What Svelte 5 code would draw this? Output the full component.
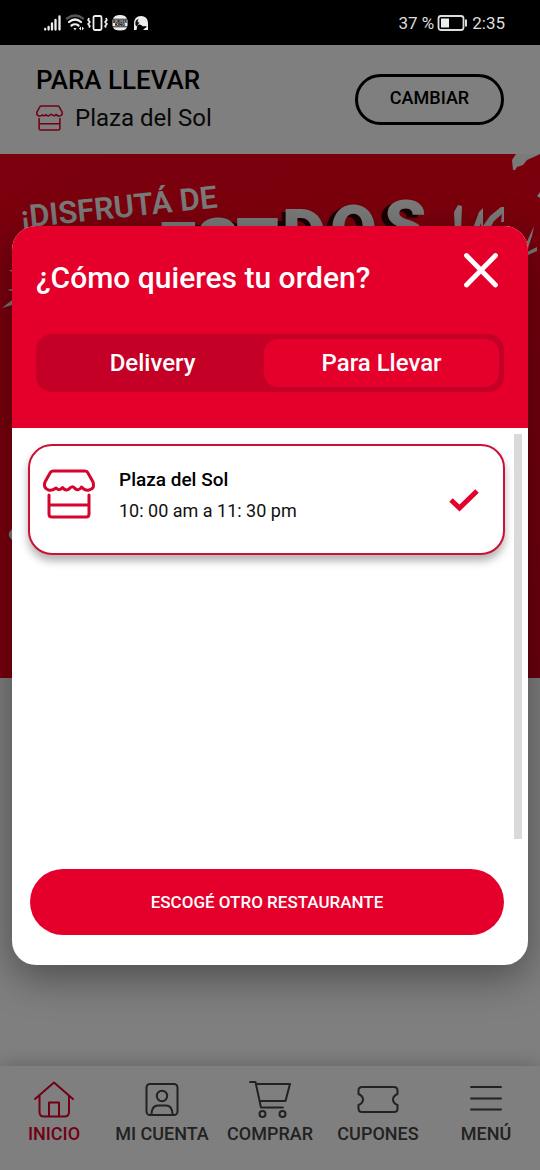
<script>
  let mode = $state('pickup');
  const tabs = [
    { id: 'home', label: 'INICIO' },
    { id: 'account', label: 'MI CUENTA' },
    { id: 'shop', label: 'COMPRAR' },
    { id: 'coupons', label: 'CUPONES' },
    { id: 'menu', label: 'MENÚ' }
  ];
</script>

{#snippet store(cls)}
  <svg class={cls} viewBox="0 0 52 50" fill="none" stroke="currentColor" stroke-linejoin="round" stroke-linecap="round" aria-hidden="true">
    <path d="M10 2H42Q44 2 45 4L50 13Q52 20 46 21Q42 22 38.500 18Q35.500 22.500 32 19.500Q29 16 26 20Q22.500 22.500 19.500 18.500Q16 22.500 13 19Q9 22 5.500 21Q0 19 2 13L7 4Q8 2 10 2Z" />
    <path d="M6 26V45Q6 48 9 48H43Q46 48 46 45V26M6 36H46" />
  </svg>
{/snippet}

<div class="app">
  <div class="status">
    <svg class="signals" viewBox="0 0 108 20" aria-hidden="true" fill="#eee">
      <g stroke="#eee" stroke-width="2.300" stroke-linecap="round">
        <path d="M2.200 16v.5M5.600 14v2.500M9 10.500v6M12.500 7v9.500M16.500 3.500v13" />
      </g>
      <g fill="none" stroke-width="2.200" stroke-linecap="round">
        <path d="M24 5.500q8-6 16 0" stroke="#555" />
        <path d="M26 9q6-5 12 0M28.500 12.500q3.500-2.500 7 0" stroke="#eee" />
      </g>
      <path d="M30.500 15h3l-1.500 2.500zM36 15.500l2-2v4zM39 13.500l2 2l-2 2z" />
      <g fill="none" stroke="#eee" stroke-width="1.800">
        <rect x="50.500" y="3" width="8" height="14" rx="1.500" />
        <path d="M46 5l-.8 2l1.600 2l-1.600 2l1.600 2l-.8 1.500M63 5l.8 2l-1.600 2l1.600 2l-1.600 2l.8 1.500" />
      </g>
      <path d="M70 5.800q1-3.800 7-3.800t7 3.800zM70 14.200h14q-1 3.300-7 3.300t-7-3.300z" />
      <rect x="69.500" y="6.600" width="15" height="6.800" />
      <text x="77" y="9.700" text-anchor="middle" font-size="3.600" fill="#000" font-weight="900">BURGER</text>
      <text x="77" y="13.200" text-anchor="middle" font-size="4.400" fill="#000" font-weight="900">KING</text>
      <path d="M91 17v-6q0-8 7-8q6.500 0 7 7v7h-5l3-3l-3-.5q-3-3-5.500-1.500l-1 5z" />
      <path d="M92.500 12q-1-5 3-6l-1 3l2 .5l-3 4zM99 13.500l4.500-.5l-.5 2z" fill="#111" />
    </svg>
    <span class="power">
      <span>37 %</span>
      <svg viewBox="0 0 32 18" width="32" height="18" aria-hidden="true">
        <rect x="1.500" y="2" width="25" height="14" rx="2.500" fill="none" stroke="#ddd" stroke-width="1.800" />
        <rect x="4" y="4.500" width="8" height="9" fill="#eee" />
        <path d="M29 5.500v7" stroke="#ddd" stroke-width="2" />
      </svg>
      <span>2:35</span>
    </span>
  </div>

  <div class="screen">
    <header class="top">
      <div class="place">
        <strong>PARA LLEVAR</strong>
        <span class="where">{@render store('shop-small')}Plaza del Sol</span>
      </div>
      <button class="change" type="button">CAMBIAR</button>
    </header>

    <div class="banner">
      <svg viewBox="0 0 540 524" preserveAspectRatio="xMidYMin slice" aria-hidden="true">
        <defs>
          <linearGradient id="glow" x1="0" y1="0" x2="1" y2="1">
            <stop offset="0" stop-color="#f8001c" />
            <stop offset=".5" stop-color="#f40018" />
            <stop offset="1" stop-color="#d8001c" />
          </linearGradient>
        </defs>
        <rect width="540" height="524" fill="url(#glow)" />
        <text x="22" y="74" transform="rotate(-6 22 74)" class="slogan">¡DISFRUTÁ DE</text>
        <text class="brush shade" x="164 202 242 278 324 378" y="120 116 116 107 103 98">ESTDOS</text>
        <text class="brush" x="158 196 236 282 330 384" y="117 113 113 104 100 95">ESTDOS</text>
        <g fill="#f4f4f4">
          <path d="M455 78l-1-20l4-7l4 1l-1 26zM472 77l7-19l4-4v18l7-10l11-9h3v15h-3l1-8l-8 7l-6 11h-6l-1-9l-3 8zM513 16l-1-10l4-6h24l-4 2l-9 4l-4 5l-6 2l-2 3zM525 92l9-20l-2 10l-4 12zM527 98l10-5v4l-9 4zM540 44l-3-2l3-4z" />
          <path d="M12 116h-3l3 2zM12 135l-5 1l5 1zM12 146l-10 8l10-3zM12 375q-6 5-1 10l1 1z" />
        </g>
      </svg>
    </div>

    <div class="filler"></div>

    <nav class="bottom">
      {#each tabs as tab}
        <a href="#{tab.id}" class:active={tab.id === 'home'}>
          <svg viewBox="0 0 44 40" fill="none" stroke="currentColor" stroke-width="2" stroke-linecap="round" stroke-linejoin="round" aria-hidden="true">
            {#if tab.id === 'home'}
              <path d="M3 19L22 2.500L41 19M7.500 16V32Q7.500 36.500 12 36.500H32.500Q37 36.500 37 32V16M17 36V22.500H27V36" />
            {:else if tab.id === 'account'}
              <rect x="6.500" y="4" width="31" height="31" rx="3.500" />
              <circle cx="22" cy="16" r="5.200" />
              <path d="M11.500 34Q12 25.500 18 25.500H26Q32 25.500 32.500 34" />
            {:else if tab.id === 'shop'}
              <path d="M2 2H7.500L13 27.500H35M8.500 4H42L37.500 21H12" />
              <circle cx="14.500" cy="34" r="3" />
              <circle cx="34.500" cy="34" r="3" />
            {:else if tab.id === 'coupons'}
              <path d="M6 7H38Q41.500 7 41.500 10.500V14Q37 16 37 19.500Q37 23 41.500 25V28.500Q41.500 32 38 32H6Q2.500 32 2.500 28.500V25Q7 23 7 19.500Q7 16 2.500 14V10.500Q2.500 7 6 7Z" />
            {:else}
              <path d="M7 7H37M7 18.500H37M7 29.500H37" />
            {/if}
          </svg>
          <span>{tab.label}</span>
        </a>
      {/each}
    </nav>

    <div class="backdrop">
      <div class="dialog" role="dialog" aria-modal="true" aria-labelledby="ask">
        <div class="head">
          <div class="title">
            <h1 id="ask">¿Cómo quieres tu orden?</h1>
            <button class="close" type="button" aria-label="Cerrar">
              <svg viewBox="0 0 36 36" aria-hidden="true"><path d="M3.500 3.500L32.500 33M32.500 3.500L3.500 33" fill="none" stroke="#fff" stroke-width="4.800" stroke-linecap="round" /></svg>
            </button>
          </div>
          <div class="switch">
            <button type="button" class:on={mode === 'delivery'} onclick={() => (mode = 'delivery')}>Delivery</button>
            <button type="button" class:on={mode === 'pickup'} onclick={() => (mode = 'pickup')}>Para Llevar</button>
          </div>
        </div>
        <div class="list">
          <button class="card" type="button">
            {@render store('shop-large')}
            <span class="info">
              <b>Plaza del Sol</b>
              <span>10: 00 am a 11: 30 pm</span>
            </span>
            <svg class="check" viewBox="0 0 30 24" aria-hidden="true"><path d="M2 12L10.500 20L28 3" fill="none" stroke="#e4002b" stroke-width="5" /></svg>
          </button>
          <div class="track"></div>
        </div>
        <div class="foot"><button class="other" type="button">ESCOGÉ OTRO RESTAURANTE</button></div>
      </div>
    </div>
  </div>
</div>

<style>
  :global(body) { margin: 0; background: #fff; }
  .app {
    min-height: 100vh;
    display: flex;
    flex-direction: column;
    font-family: Roboto, "Liberation Sans", sans-serif;
    color: #000;
  }
  button {
    font: inherit;
    color: inherit;
    border: 0;
    padding: 0;
    background: none;
    cursor: pointer;
  }
  svg { display: block; flex: none; }
  .status {
    height: 45px;
    padding: 0 35px 0 43px;
    background: #000;
    color: #ddd;
    display: flex;
    align-items: center;
    justify-content: space-between;
    font-size: 17px;
  }
  .signals { width: 108px; height: 20px; }
  .power { display: flex; align-items: center; gap: 3px; }
  .screen { position: relative; flex: 1; display: flex; flex-direction: column; }
  .top {
    box-sizing: border-box;
    height: 109px;
    padding: 0 36px;
    display: flex;
    align-items: center;
    justify-content: space-between;
  }
  .place { display: flex; flex-direction: column; gap: 6px; padding-bottom: 2px; }
  .place strong { font-size: 26px; line-height: 32px; font-weight: 500; }
  .where { display: flex; align-items: center; gap: 12px; font-size: 24px; line-height: 32px; color: #111; }
  .where :global(.shop-small) { width: 27px; height: 26px; stroke-width: 3; color: #e4002b; }
  .change {
    box-sizing: border-box;
    width: 149px;
    height: 51px;
    padding-bottom: 4px;
    border: 3px solid #000;
    border-radius: 26px;
    font-size: 18px;
    font-weight: 500;
  }
  .banner { height: 524px; overflow: hidden; }
  .banner svg { width: 100%; height: 100%; }
  .slogan { fill: #f4f4f4; font-size: 31px; font-weight: 600; }
  .brush { fill: #f4f4f4; font-size: 68px; font-weight: 900; }
  .brush.shade { fill: #300006; }
  .filler { flex: 1; min-height: 80px; }
  .bottom {
    box-sizing: border-box;
    height: 104px;
    padding-top: 14px;
    display: grid;
    grid-template-columns: repeat(5, 1fr);
    background: #fff;
    box-shadow: 0 0 20px rgba(0, 0, 0, 0.25);
  }
  .bottom a {
    display: flex;
    flex-direction: column;
    align-items: center;
    gap: 4px;
    color: #444;
    text-decoration: none;
    white-space: nowrap;
    font-size: 18px;
    line-height: 20px;
    font-weight: 500;
  }
  .bottom a.active { color: #e4002b; }
  .bottom svg { width: 44px; height: 40px; }
  .backdrop {
    position: absolute;
    inset: 0;
    padding: 181px 12px 0;
    background: rgba(0, 0, 0, 0.5);
  }
  .dialog {
    background: #fff;
    border-radius: 24px;
    overflow: hidden;
    box-shadow: 0 12px 40px rgba(0, 0, 0, 0.4);
  }
  .head { background: #e4002b; color: #fff; padding: 24px 24px 36px; }
  .title { display: flex; align-items: center; justify-content: space-between; height: 56px; }
  h1 { margin: 0; font-size: 30px; line-height: 36px; font-weight: 500; }
  .close { align-self: flex-start; padding: 2px 5px; }
  .close svg { width: 36px; height: 36px; }
  .switch {
    display: grid;
    grid-template-columns: 19fr 20fr;
    margin-top: 28px;
    padding: 5px;
    border-radius: 16px;
    background: #c50027;
  }
  .switch button { height: 48px; border-radius: 14px; font-size: 24px; font-weight: 500; }
  .switch button.on { background: #e4002b; }
  .list { display: flex; justify-content: space-between; height: 405px; padding: 6px 6px 0 16px; }
  .card {
    box-sizing: border-box;
    flex: 1;
    height: 111px;
    margin: 10px 9px 0 0;
    padding: 0 24px 0 13px;
    display: flex;
    align-items: center;
    border: 2px solid #cc1036;
    border-radius: 24px;
    background: #fff;
    box-shadow: 0 6px 8px rgba(0, 0, 0, 0.3);
    text-align: left;
  }
  .card :global(.shop-large) { width: 52px; height: 50px; margin-bottom: 12px; stroke-width: 3; color: #d4052f; }
  .info { flex: 1; display: flex; flex-direction: column; margin: 0 0 10px 24px; font-size: 18px; line-height: 31px; color: #111; }
  .info b { font-size: 19px; font-weight: 500; color: #000; }
  .check { width: 30px; height: 24px; }
  .track { width: 8px; background: #dadada; }
  .foot { padding: 30px 24px 30px 18px; }
  .other {
    width: 100%;
    height: 66px;
    border-radius: 33px;
    background: #e4002b;
    color: #fff;
    font-size: 17px;
    font-weight: 500;
  }
</style>
